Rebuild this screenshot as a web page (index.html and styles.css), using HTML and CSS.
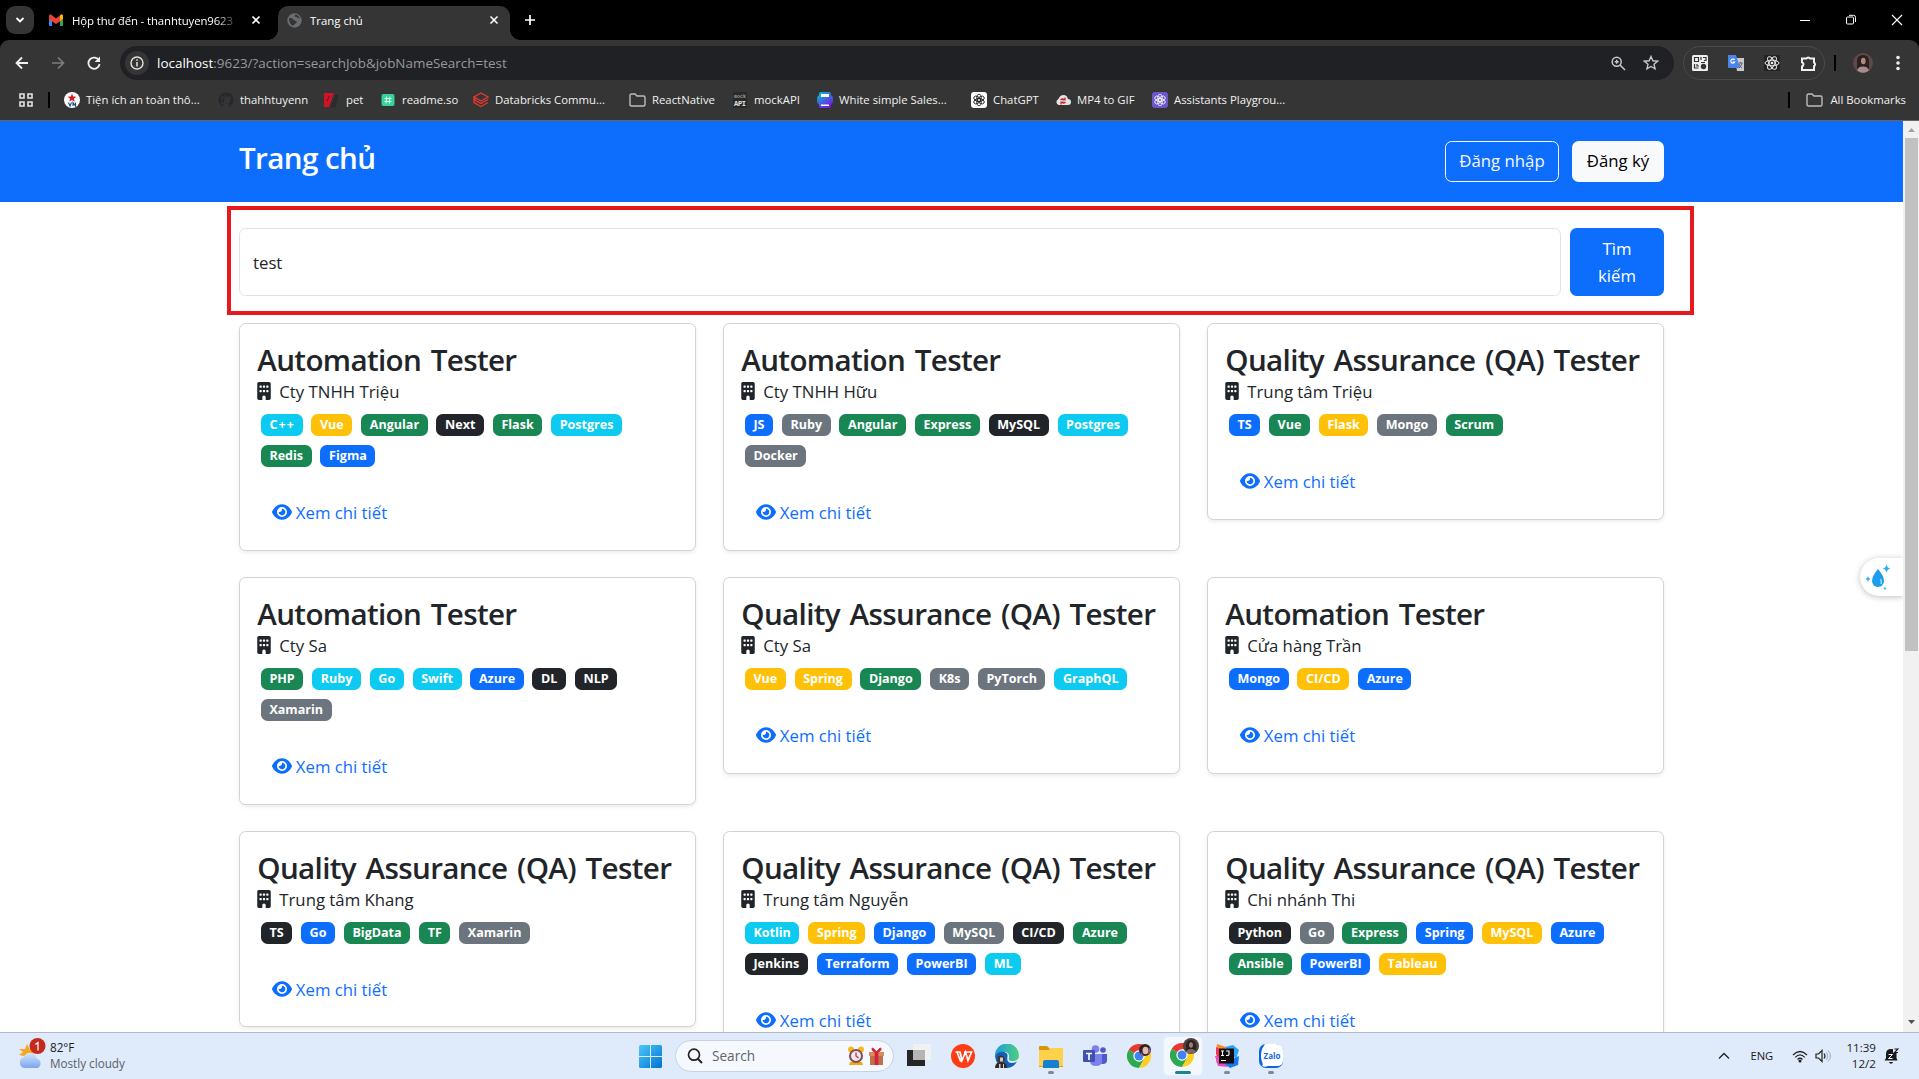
FILE: index.html
```html
<!DOCTYPE html>
<html lang="vi">
<head>
<meta charset="utf-8">
<title>Trang chủ</title>
<link rel="stylesheet" href="styles.css">
</head>
<body>
<svg class="sprite" width="0" height="0">
  <defs>
    <linearGradient id="winG" x1="0" y1="0" x2="1" y2="1"><stop offset="0" stop-color="#4cc8fb"/><stop offset="1" stop-color="#0072d0"/></linearGradient>
    <linearGradient id="edgeG" x1="0" y1="0" x2="1" y2="0"><stop offset="0" stop-color="#1b9de2"/><stop offset="1" stop-color="#4fd07a"/></linearGradient>
    <linearGradient id="canvaG" x1="0" y1="0" x2=".6" y2="1"><stop offset="0" stop-color="#00c4cc"/><stop offset="1" stop-color="#7020e8"/></linearGradient>
    <linearGradient id="cloudG" x1="0" y1="0" x2="0" y2="1"><stop offset="0" stop-color="#d6e6fd"/><stop offset="1" stop-color="#7ba6ec"/></linearGradient>
    <symbol id="building" viewBox="0 0 384 512"><path fill-rule="evenodd" d="M48 0C21.500 0 0 21.500 0 48V464c0 26.500 21.500 48 48 48h96V432c0-26.500 21.500-48 48-48s48 21.500 48 48v80h96c26.500 0 48-21.500 48-48V48c0-26.500-21.500-48-48-48H48zM64 240c0-8.800 7.200-16 16-16h32c8.800 0 16 7.200 16 16v32c0 8.800-7.200 16-16 16H80c-8.800 0-16-7.200-16-16zm112-16h32c8.800 0 16 7.200 16 16v32c0 8.800-7.200 16-16 16H176c-8.800 0-16-7.200-16-16V240c0-8.800 7.200-16 16-16zm80 16c0-8.800 7.200-16 16-16h32c8.800 0 16 7.200 16 16v32c0 8.800-7.200 16-16 16H272c-8.800 0-16-7.200-16-16zM80 96h32c8.800 0 16 7.200 16 16v32c0 8.800-7.200 16-16 16H80c-8.800 0-16-7.200-16-16V112c0-8.800 7.200-16 16-16zm80 16c0-8.800 7.200-16 16-16h32c8.800 0 16 7.200 16 16v32c0 8.800-7.200 16-16 16H176c-8.800 0-16-7.200-16-16zM272 96h32c8.800 0 16 7.200 16 16v32c0 8.800-7.200 16-16 16H272c-8.800 0-16-7.200-16-16V112c0-8.800 7.200-16 16-16z"/></symbol>
    <symbol id="eye" viewBox="0 0 576 512"><path d="M288 32c-80.800 0-145.500 36.800-192.600 80.600C48.600 156 17.300 208 2.500 243.700c-3.300 7.900-3.300 16.700 0 24.600C17.300 304 48.600 356 95.400 399.400C142.500 443.200 207.200 480 288 480s145.500-36.800 192.600-80.600c46.800-43.500 78.100-95.400 93-131.100c3.300-7.900 3.300-16.700 0-24.600c-14.900-35.700-46.200-87.700-93-131.100C433.500 68.800 368.800 32 288 32zM144 256a144 144 0 1 1 288 0 144 144 0 1 1-288 0zm144-64c0 35.300-28.700 64-64 64c-7.100 0-13.900-1.200-20.300-3.300c-5.500-1.800-11.900 1.600-11.700 7.400c.3 6.900 1.300 13.800 3.200 20.700c13.700 51.200 66.400 81.600 117.600 67.900s81.600-66.400 67.900-117.600c-11.100-41.500-47.800-69.400-88.600-71.100c-5.800-.2-9.200 6.100-7.400 11.700c2.100 6.400 3.300 13.200 3.300 20.300z"/></symbol>
    <symbol id="x" viewBox="0 0 10 10"><path d="M1.500 1.500l7 7M8.500 1.500l-7 7" fill="none" stroke="currentColor" stroke-width="1.600"/></symbol>
    <symbol id="folder" viewBox="0 0 17 14"><path d="M1 2.500Q1 1 2.500 1H6l2 2h6.500Q16 3 16 4.500v7q0 1.500-1.500 1.500h-12Q1 13 1 11.500z" fill="none" stroke="#bdbdbd" stroke-width="1.400"/></symbol>
    <symbol id="knot" viewBox="0 0 16 16"><g fill="none" stroke="currentColor" stroke-width="1"><ellipse cx="8" cy="5.600" rx="2.600" ry="4.300"/><ellipse cx="8" cy="5.600" rx="2.600" ry="4.300" transform="rotate(60 8 8)"/><ellipse cx="8" cy="5.600" rx="2.600" ry="4.300" transform="rotate(120 8 8)"/><ellipse cx="8" cy="5.600" rx="2.600" ry="4.300" transform="rotate(180 8 8)"/><ellipse cx="8" cy="5.600" rx="2.600" ry="4.300" transform="rotate(240 8 8)"/><ellipse cx="8" cy="5.600" rx="2.600" ry="4.300" transform="rotate(300 8 8)"/></g></symbol>
    <symbol id="chrome" viewBox="0 0 24 24"><path d="M12 12L1.600 6A12 12 0 0 1 22.400 6z" fill="#e33b2e"/><path d="M12 12L1.600 6A12 12 0 0 0 12 24l5.200-9z" fill="#2da94f"/><path d="M12 12l5 3-5 9A12 12 0 0 0 22.400 6H12z" fill="#fdd023"/><circle cx="12" cy="12" r="5.700" fill="#fff"/><circle cx="12" cy="12" r="4.500" fill="#3f83f1"/></symbol>
  </defs>
</svg>

<div class="tabs">
  <div class="tab-search"><svg width="10" height="8" viewBox="0 0 10 8"><path d="M1.500 2L5 5.500 8.500 2" fill="none" stroke="#fff" stroke-width="1.800"/></svg></div>
  <div class="tab">
    <svg width="16" height="12" viewBox="0 0 16 12"><path d="M1 1.500V11q0 1 1 1h2V4z" fill="#4285f4"/><path d="M15 1.500V11q0 1-1 1h-2V4z" fill="#34a853"/><path d="M1 5.500V2Q1 0 3 .5l5 4 5-4q2-.5 2 1.500v3.500L8 10z" fill="#ea4335"/><path d="M12 1.500l1-1q2-.5 2 1.500v2.500L12 7z" fill="#fbbc04"/></svg>
    <span class="tab-title fade">Hộp thư đến - thanhtuyen9623</span>
    <svg class="close" width="10" height="10"><use href="#x"/></svg>
  </div>
  <div class="tab active">
    <svg width="15" height="15" viewBox="0 0 15 15"><circle cx="7.500" cy="7.500" r="7.200" fill="#6a6d70"/><path d="M2 5q3-.5 4 1t3 2-1 3-2 2Q2 11 2 5zM8 1.500q-1 2 1 2.500t4 2Q12 2 8 1.500z" fill="#353535"/></svg>
    <span class="tab-title">Trang chủ</span>
    <svg class="close" width="10" height="10"><use href="#x"/></svg>
  </div>
  <svg class="plus" width="12" height="12" viewBox="0 0 12 12"><path d="M6 1v10M1 6h10" stroke="#fff" stroke-width="1.700"/></svg>
  <div class="window-buttons">
    <svg width="12" height="12" viewBox="0 0 12 12"><path d="M1 6.500h10" stroke="#fff"/></svg>
    <svg width="12" height="12" viewBox="0 0 12 12"><path d="M1.500 4q0-1 1-1h5q1 0 1 1v5q0 1-1 1h-5q-1 0-1-1zM4 1.300h4.500q2 0 2 2V8" fill="none" stroke="#fff"/></svg>
    <svg width="12" height="12" viewBox="0 0 12 12"><path d="M1 1l10 10M11 1L1 11" stroke="#fff" stroke-width="1.100"/></svg>
  </div>
</div>

<div class="toolbar">
  <div class="nav">
    <svg width="14" height="14" viewBox="0 0 14 14"><path d="M13 7H2M7 1.500L1.500 7 7 12.500" fill="none" stroke="#f0f0f0" stroke-width="1.800"/></svg>
    <svg width="14" height="14" viewBox="0 0 14 14"><path d="M1 7h11M7 1.500L12.500 7 7 12.500" fill="none" stroke="#7d7d7d" stroke-width="1.700"/></svg>
    <svg width="14" height="14" viewBox="0 0 14 14"><path d="M12 4.500A5.600 5.600 0 1 0 12.600 8" fill="none" stroke="#f0f0f0" stroke-width="1.800"/><path d="M13 .5V6H7.600z" fill="#f0f0f0"/></svg>
  </div>
  <div class="omnibox">
    <span class="info"><svg width="14" height="14" viewBox="0 0 14 14"><circle cx="7" cy="7" r="6" fill="none" stroke="#e3e3e3" stroke-width="1.400"/><path d="M7 6v4.500M7 3.300v1.500" stroke="#e3e3e3" stroke-width="1.500"/></svg></span>
    <span class="url"><b>localhost</b>:9623/?action=searchJob&amp;jobNameSearch=test</span>
    <svg class="zoom-icon" width="15" height="15" viewBox="0 0 15 15"><circle cx="5.700" cy="5.700" r="4.500" fill="none" stroke="#c7c7c7" stroke-width="1.500"/><path d="M9 9l5 5M5.700 3.700v4M3.700 5.700h4" stroke="#c7c7c7" stroke-width="1.500"/></svg>
    <svg width="16" height="16" viewBox="0 0 16 16"><path d="M8 1.500l1.900 4.300 4.700.4-3.600 3.100 1.100 4.600L8 11.500l-4.100 2.400L5 9.300 1.400 6.200l4.700-.4z" fill="none" stroke="#c7c7c7" stroke-width="1.400"/></svg>
  </div>
  <div class="extensions">
    <svg width="16" height="16" viewBox="0 0 16 16"><rect width="16" height="16" rx="1.500" fill="#eee"/><path d="M2.500 2.500h4v4h-4zM9 2v3M11 2.500h3v3h-2M2.500 9v4h4M5 9v2h2M9 7.500h4" fill="none" stroke="#333" stroke-width="1.200"/><circle cx="11.500" cy="11.500" r="2.700" fill="#333"/></svg>
    <svg width="16" height="16" viewBox="0 0 16 16"><path d="M7 3h9v13H9z" fill="#c9c9c9"/><path d="M0 0h8l4 13H1q-1 0-1-1z" fill="#4a86e8"/><path d="M6.500 5A2 2 0 1 0 6.600 7H4.800" fill="none" stroke="#fff" stroke-width="1.200"/><path d="M10.500 8h4M12.500 7v1M14 8q-1 4-3 5M11 9q1 3 3 4" fill="none" stroke="#557" stroke-width=".9"/></svg>
    <svg width="16" height="16" viewBox="0 0 16 16"><path fill="#222" d="M0 0h16v16H0z"/><g fill="none" stroke="#e8e8e8"><ellipse cx="8" cy="8" rx="7" ry="2.800"/><ellipse cx="8" cy="8" rx="7" ry="2.800" transform="rotate(60 8 8)"/><ellipse cx="8" cy="8" rx="7" ry="2.800" transform="rotate(120 8 8)"/></g><circle cx="8" cy="8" r="1.300" fill="#eee"/></svg>
    <svg width="17" height="17" viewBox="0 0 17 17"><path d="M2 3.500h4.500a2 2 0 0 1 3.500 0h4v4.200a2 2 0 0 1 0 3.500V15H2v-3.500a2.300 2.300 0 0 0 0-4.300z" fill="none" stroke="#f0f0f0" stroke-width="2"/></svg>
  </div>
  <i class="sep"></i>
  <svg class="avatar" width="20" height="20" viewBox="0 0 20 20"><circle cx="10" cy="10" r="10" fill="#5d4a46"/><path d="M4 17V8q0-6 6-6t6 6v9z" fill="#2b2022"/><ellipse cx="10.300" cy="8" rx="2.300" ry="3.200" fill="#b38a7a"/><path d="M4 17.500q1-4 6-4t6 4q-6 4.500-12 0z" fill="#a58e8a"/></svg>
  <svg width="4" height="16" viewBox="0 0 4 16"><g fill="#eee"><circle cx="2" cy="2.500" r="1.800"/><circle cx="2" cy="8" r="1.800"/><circle cx="2" cy="13.500" r="1.800"/></g></svg>
</div>

<div class="bookmarks">
  <svg width="14" height="14" viewBox="0 0 14 14"><path d="M1 1h4v4H1zM9 1h4v4H9zM1 9h4v4H1zM9 9h4v4H9z" fill="none" stroke="#e3e3e3" stroke-width="1.600"/></svg>
  <i class="sep"></i>
  <div class="marks">
    <span><svg width="16" height="16" viewBox="0 0 16 16"><circle cx="8" cy="8" r="8" fill="#fff"/><path d="M8 1.500l1.200 3 3.200.2-2.500 2 .9 3.100L8 8l-2.800 1.800.9-3.100-2.500-2 3.200-.2z" fill="#d71920"/><path d="M4.500 10.500L6 14l1.500-3.500M9 14v-3.500l2.500 3.500v-3.500" fill="none" stroke="#1d4e89" stroke-width="1.100"/></svg>Tiện ích an toàn thô...</span>
    <span><svg width="16" height="16" viewBox="0 0 16 16"><path d="M8 .5a7.500 7.500 0 0 0-2.500 14.600V12Q3.500 12 3 10.500M5.500 11Q3 10 3.500 6.500L3.600 4l2 .8q2.400-.6 4.800 0l2-.8.1 2.500Q13 10 10.500 11v4.100A7.500 7.500 0 0 0 8 .5z" fill="#24292e"/></svg>thahhtuyenn</span>
    <span><svg width="20" height="16" viewBox="0 0 20 16"><path d="M4 1h10L9 15H4z" fill="#d3122a"/><path d="M9.500 4L7 9M16 3l-5 12h4l3-12z" fill="#2b2b2b" stroke="#2b2b2b"/></svg>pet</span>
    <span><svg width="16" height="16" viewBox="0 0 16 16"><rect x="1.500" y="2" width="13" height="12" rx="2" fill="#36d399"/><path d="M6.500 4.500L6 11.500M10 4.500l-.5 7M4.500 6.500h7M4.500 9.500h7" stroke="#d9fff0"/></svg>readme.so</span>
    <span><svg width="16" height="16" viewBox="0 0 16 16"><path d="M1 5l7 4 7-4-7-4zM1 5v2.500l7 4 7-4M1 8v2.500l7 4 7-4M1 7.500l7 4" fill="none" stroke="#e3382c" stroke-width="1.400"/></svg>Databricks Commu...</span>
    <span><svg width="17" height="14"><use href="#folder"/></svg>ReactNative</span>
    <span><svg width="16" height="16" viewBox="0 0 16 16"><path fill="#292929" d="M1 0h14v16H1z"/><g font-family="Liberation Mono,monospace" font-weight="700"><text x="2" y="6" font-size="5" fill="#9b9b9b">mock</text><text x="2" y="14" font-size="7" fill="#e4e4e4" textLength="12">API</text></g></svg>mockAPI</span>
    <span><svg width="16" height="16" viewBox="0 0 16 16"><rect y="3" width="16" height="10" rx="4" fill="url(#canvaG)"/><rect x="2" width="12" height="16" rx="2" fill="url(#canvaG)"/><path d="M4 2h8v3H4zM4 12.500h8V14H4z" fill="#fff"/></svg>White simple Sales...</span>
    <span><svg width="16" height="16" viewBox="0 0 16 16"><rect width="16" height="16" rx="3" fill="#fff"/><g color="#222"><use href="#knot" x="1" y="1" width="14" height="14"/></g></svg>ChatGPT</span>
    <span><svg width="16" height="16" viewBox="0 0 16 16"><path d="M3.500 13a3.200 3.200 0 0 1 0-6Q5 3 8.500 3t4.500 4a3 3 0 0 1 0 6z" fill="#e5e5e5"/><path d="M5.500 8q2-2 4.500 0M10.500 10q-2 2-4.500 0M10 5.500V8H7.500M6 12.500V10h2.500" fill="none" stroke="#c3262c" stroke-width="1.200"/></svg>MP4 to GIF</span>
    <span><svg width="16" height="16" viewBox="0 0 16 16"><rect width="16" height="16" rx="3" fill="#6e56cf"/><g color="#eee"><use href="#knot" x="1" y="1" width="14" height="14"/></g></svg>Assistants Playgrou...</span>
  </div>
  <i class="sep"></i>
  <span class="all"><svg width="17" height="14"><use href="#folder"/></svg>All Bookmarks</span>
</div>

<div class="viewport">
  <div class="page">
    <header>
      <div class="container">
        <h1>Trang chủ</h1>
        <div class="auth"><a class="btn outline">Đăng nhập</a><a class="btn light">Đăng ký</a></div>
      </div>
    </header>
    <main class="container">
      <form class="search">
        <div class="field">test</div>
        <a class="btn primary">Tìm kiếm</a>
        <div class="highlight"></div>
      </form>
      <section class="jobs">
        <article><h3>Automation Tester</h3><p class="company"><svg><use href="#building"/></svg>Cty TNHH Triệu</p>
          <div class="tags"><b class="info-c wide">C++</b><b class="warn">Vue</b><b class="ok">Angular</b><b class="dark">Next</b><b class="ok">Flask</b><b class="info-c">Postgres</b><b class="ok">Redis</b><b class="blue">Figma</b></div>
          <a class="detail"><svg><use href="#eye"/></svg>Xem chi tiết</a></article>
        <article><h3>Automation Tester</h3><p class="company"><svg><use href="#building"/></svg>Cty TNHH Hữu</p>
          <div class="tags"><b class="blue">JS</b><b class="gray">Ruby</b><b class="ok">Angular</b><b class="ok">Express</b><b class="dark">MySQL</b><b class="info-c">Postgres</b><b class="gray">Docker</b></div>
          <a class="detail"><svg><use href="#eye"/></svg>Xem chi tiết</a></article>
        <article><h3>Quality Assurance (QA) Tester</h3><p class="company"><svg><use href="#building"/></svg>Trung tâm Triệu</p>
          <div class="tags"><b class="blue">TS</b><b class="ok">Vue</b><b class="warn">Flask</b><b class="gray">Mongo</b><b class="ok">Scrum</b></div>
          <a class="detail"><svg><use href="#eye"/></svg>Xem chi tiết</a></article>
        <article><h3>Automation Tester</h3><p class="company"><svg><use href="#building"/></svg>Cty Sa</p>
          <div class="tags"><b class="ok">PHP</b><b class="info-c">Ruby</b><b class="info-c">Go</b><b class="info-c">Swift</b><b class="blue">Azure</b><b class="dark">DL</b><b class="dark">NLP</b><b class="gray">Xamarin</b></div>
          <a class="detail"><svg><use href="#eye"/></svg>Xem chi tiết</a></article>
        <article><h3>Quality Assurance (QA) Tester</h3><p class="company"><svg><use href="#building"/></svg>Cty Sa</p>
          <div class="tags"><b class="warn">Vue</b><b class="warn">Spring</b><b class="ok">Django</b><b class="gray">K8s</b><b class="gray">PyTorch</b><b class="info-c">GraphQL</b></div>
          <a class="detail"><svg><use href="#eye"/></svg>Xem chi tiết</a></article>
        <article><h3>Automation Tester</h3><p class="company"><svg><use href="#building"/></svg>Cửa hàng Trần</p>
          <div class="tags"><b class="blue">Mongo</b><b class="warn">CI/CD</b><b class="blue">Azure</b></div>
          <a class="detail"><svg><use href="#eye"/></svg>Xem chi tiết</a></article>
        <article><h3>Quality Assurance (QA) Tester</h3><p class="company"><svg><use href="#building"/></svg>Trung tâm Khang</p>
          <div class="tags"><b class="dark">TS</b><b class="blue">Go</b><b class="ok">BigData</b><b class="ok">TF</b><b class="gray">Xamarin</b></div>
          <a class="detail"><svg><use href="#eye"/></svg>Xem chi tiết</a></article>
        <article><h3>Quality Assurance (QA) Tester</h3><p class="company"><svg><use href="#building"/></svg>Trung tâm Nguyễn</p>
          <div class="tags"><b class="info-c">Kotlin</b><b class="warn">Spring</b><b class="blue">Django</b><b class="gray">MySQL</b><b class="dark">CI/CD</b><b class="ok">Azure</b><b class="dark">Jenkins</b><b class="blue">Terraform</b><b class="blue">PowerBI</b><b class="info-c">ML</b></div>
          <a class="detail"><svg><use href="#eye"/></svg>Xem chi tiết</a></article>
        <article><h3>Quality Assurance (QA) Tester</h3><p class="company"><svg><use href="#building"/></svg>Chi nhánh Thi</p>
          <div class="tags"><b class="dark">Python</b><b class="gray">Go</b><b class="ok">Express</b><b class="blue">Spring</b><b class="warn">MySQL</b><b class="blue">Azure</b><b class="ok">Ansible</b><b class="blue">PowerBI</b><b class="warn">Tableau</b></div>
          <a class="detail"><svg><use href="#eye"/></svg>Xem chi tiết</a></article>
      </section>
    </main>
    <div class="drop"><svg width="26" height="32" viewBox="0 0 26 32"><path d="M13 8q6 7 6 12a6 6 0 0 1-12 0q0-5 6-12z" fill="#1c9df0"/><path d="M15.500 18q1.500 2 .5 5" stroke="#a9defc" stroke-width="1.500" fill="none"/><path d="M21.500 3q.5 4 4 4.500-3.500.5-4 4.500-.5-4-4-4.500 3.500-.5 4-4.500zM3 15q.3 2.500 2.700 3-2.400.5-2.700 3-.3-2.500-2.700-3Q2.700 17.500 3 15zM20 25.500q.2 1.800 1.800 2-1.600.2-1.800 2-.2-1.800-1.800-2 1.600-.2 1.800-2z" fill="#35adf3"/></svg></div>
  </div>
  <div class="scrollbar">
    <svg width="7" height="4" viewBox="0 0 7 4"><path d="M0 4L3.500 0 7 4z" fill="#a3a3a3"/></svg>
    <div class="thumb"></div>
    <svg class="down" width="7" height="4" viewBox="0 0 7 4"><path d="M0 0l3.500 4L7 0z" fill="#505050"/></svg>
  </div>
</div>

<div class="taskbar">
  <div class="weather">
    <svg width="28" height="32" viewBox="0 0 28 32"><path d="M9 6l3 6 5-2-2 8H6l-5-1 4-3-4-3 6 0z" fill="#f7a823"/><path d="M6 30a5.500 5.500 0 0 1-.5-10.500Q8 14 13 15q5 .5 5.500 5.500A5 5 0 0 1 19.500 30z" fill="url(#cloudG)"/><circle cx="19.500" cy="8" r="8" fill="#c42b1c"/><path d="M17.500 6.500l2.500-2v8" fill="none" stroke="#fff" stroke-width="1.200"/></svg>
    <p>82°F<br><span>Mostly cloudy</span></p>
  </div>
  <div class="dock">
    <svg class="win" width="23" height="23" viewBox="0 0 23 23"><path d="M0 1.500Q0 0 1.500 0H11v11H0zM12 0h9.500Q23 0 23 1.500V11H12zM0 12h11v11H1.500Q0 23 0 21.500zM12 12h11v9.500q0 1.500-1.500 1.500H12z" fill="url(#winG)"/></svg>
    <div class="find">
      <svg width="16" height="16" viewBox="0 0 16 16"><circle cx="7" cy="6.700" r="5.500" fill="none" stroke="#222" stroke-width="1.700"/><path d="M11 11l4 4" stroke="#222" stroke-width="2"/></svg>
      <span>Search</span>
      <svg width="16" height="20" viewBox="0 0 16 20"><circle cx="3" cy="3.500" r="3" fill="#f6b921"/><circle cx="13" cy="3.500" r="3" fill="#f6b921"/><path d="M2 16h12l1 3H1z" fill="#f0a81e"/><circle cx="8" cy="10" r="7" fill="#80504c"/><circle cx="8" cy="10" r="5" fill="#eee6f2"/><path d="M8 6.500V10l2.500 2" stroke="#d22d45" stroke-width="1.300" fill="none"/></svg>
      <svg width="15" height="18" viewBox="0 0 15 18"><path d="M0 5h15v4H0z" fill="#d78b5b"/><path d="M1 9h13v9H1z" fill="#bd714b"/><path d="M5.700 5h3.600v13H5.700z" fill="#d9203b"/><path d="M7.500 5Q3 5 3 2t4.500 3Q12-1 12 2t-4.500 3z" fill="#d9203b" stroke="#d9203b"/></svg>
    </div>
    <div class="app view"><svg width="24" height="22" viewBox="0 0 24 22"><path d="M0 6h18v16H0z" fill="#252525"/><path d="M6 1q0-1 1-1h16q1 0 1 1v14q0 1-1 1H6z" fill="#f1f1f1"/><path d="M6 6h12v10H6z" fill="#b5b5b5"/></svg></div>
    <div class="app"><svg width="24" height="24" viewBox="0 0 24 24"><circle cx="12" cy="12" r="12" fill="#ff3d14"/><path d="M4.500 8h4.500l2 8.500L14.500 8 17 16.500 20.500 8H13M6 8l3.500 9h1.300" fill="none" stroke="#fff" stroke-width="1.700"/></svg></div>
    <div class="app"><svg width="24" height="24" viewBox="0 0 24 24"><path d="M0 12A12 12 0 0 1 24 11q0 6-6 6-5 0-4-3 1-6-5-6-6 0-9 4z" fill="url(#edgeG)"/><path d="M0 12q3-5 9-4 4 1 3.500 4-1.500 7 4 7 3 0 5.500-1.500Q18.500 24 12 24 1 23 0 12z" fill="#1461b0"/><circle cx="6" cy="15" r="3.500" fill="#3d3534"/><path d="M0 24q0-6 6-6t6 6z" fill="#302a29"/><path d="M5 13.500h3v4H5zM4 20h1.500v4H4zM8 20h1v4H8z" fill="#dcc6b8"/></svg></div>
    <div class="app run"><svg width="24" height="24" viewBox="0 0 24 24"><path d="M0 3q0-1 1-1h7l3 3v5H0z" fill="#d9960a"/><path d="M0 6h10l2-2h12v18H0z" fill="#ffd04a"/><path d="M4 24v-6q0-2 2-2h12q2 0 2 2v6z" fill="#157fd0"/><path d="M0 22h4v1H0zM20 22h4v1h-4z" fill="#e1a11d"/></svg></div>
    <div class="app"><svg width="24" height="24" viewBox="0 0 24 24"><circle cx="12.500" cy="5" r="3.800" fill="#7b83eb"/><circle cx="20" cy="6" r="2.800" fill="#5059c9"/><path d="M16 10h8v6q0 4-4 4t-4-4z" fill="#5059c9"/><path d="M7 10h12v7q0 5-6 5t-6-5z" fill="#7b83eb"/><rect y="6" width="12" height="12" rx="1" fill="#4450ad"/><path d="M3 9.500h6M6 9.500V16" stroke="#fff" stroke-width="1.600"/></svg></div>
    <div class="app"><svg width="24" height="24" viewBox="0 0 24 24"><use href="#chrome" width="24" height="24"/><circle cx="18" cy="6" r="6" fill="#2c2225"/><ellipse cx="18.500" cy="6.500" rx="3" ry="3.800" fill="#e6b9a9"/><path d="M13 11l2-3 1 4M21 11l1-8 2 4" fill="#8b5c9c"/></svg></div>
    <div class="app run current"><svg width="30" height="30" viewBox="0 0 30 30"><use href="#chrome" x="1" y="5" width="24" height="24"/><circle cx="22" cy="8" r="8" fill="#4d423e"/><path d="M17 13V7q1-5 5-5t5 5v6z" fill="#2a2223"/><ellipse cx="22" cy="7" rx="2" ry="2.800" fill="#a17e72"/><path d="M17 14q1-3 5-3t5 3q-5 3-10 0z" fill="#7d6a66"/></svg></div>
    <div class="app run"><svg width="24" height="24" viewBox="0 0 24 24"><path d="M2 0l9 3-5 12-5 4z" fill="#fb8c22"/><path d="M0 12l6-1 7 12-10-1z" fill="#e74ac4"/><path d="M10 3l8-2 6 5-3 9z" fill="#2aa3f4"/><path d="M24 12l-1 9-8 3-6-5z" fill="#1b77ec"/><path d="M1 3l4 2-1 9-3-4z" fill="#f5345e"/><path d="M4 4.500h15v15H4z" fill="#100c0d"/><path d="M6 7h3M7.500 7v4.500M6 11.500h3M11 7h3v3.500q0 1-2 1h-1M6 16.500h5" fill="none" stroke="#fff" stroke-width="1.100"/></svg></div>
    <div class="app run"><svg width="24" height="24" viewBox="0 0 24 24"><rect width="24" height="24" rx="7" fill="#0b63e5"/><path d="M6 0h11q7 0 7 7v9q0 6-6 6H9q-3 1.500-6 0 1.500-2 0-4-2-6 0-13z" fill="#fff"/><text x="4.500" y="14.500" font-family="Open Sans,sans-serif" font-size="8" font-weight="700" fill="#1268e8" textLength="17">Zalo</text></svg></div>
  </div>
  <div class="tray">
    <svg class="up" width="12" height="8" viewBox="0 0 12 8"><path d="M1 6.500l5-5 5 5" fill="none" stroke="#222" stroke-width="1.300"/></svg>
    <span class="lang">ENG</span>
    <svg class="wifi" width="16" height="13" viewBox="0 0 16 13"><g fill="none" stroke="#222" stroke-width="1.200"><path d="M1 5q7-7 14 0M3.200 7.300q4.800-4.800 9.600 0M5.500 9.500q2.500-2.500 5 0"/></g><circle cx="8" cy="11" r="1.500" fill="#222"/></svg>
    <svg class="vol" width="17" height="14" viewBox="0 0 17 14"><path d="M1 5h2.500L7 1.500v11L3.500 9H1zM9 4.500q2 2.500 0 5" fill="none" stroke="#222" stroke-width="1.200"/><path d="M11 3q3.500 4 0 8M13 1.500q5 5.500 0 11" fill="none" stroke="#a3abb5"/></svg>
    <p class="clock">11:39<br>12/2</p>
    <svg width="15" height="16" viewBox="0 0 15 16"><path d="M2 6q0-5 5-5h2v4h3.500v5l1 2.500H.500L2 10zM5 14h4q-.5 1.700-2 1.700T5 14z" fill="#1b1b1b"/><path d="M4.500 6.500h4l-4 4h4M10.500 1H14l-3.500 3.500H14" fill="none" stroke-width="1.100" stroke="#1b1b1b"/><path d="M4.500 6.500h4l-4 4h4" fill="none" stroke="#fff"/></svg>
  </div>
</div>
</body>
</html>
```
FILE: styles.css
```css
* { box-sizing: border-box; }
html, body { margin: 0; height: 100%; overflow: hidden; }
body {
  display: flex;
  flex-direction: column;
  height: 1079px;
  background: #000;
  font-family: "Open Sans", "Noto Sans", sans-serif;
  color: #212529;
}
h1, h3, p { margin: 0; }
svg { flex: none; display: block; }
.sprite { position: absolute; }

/* Browser tabs */
.tabs {
  flex: none;
  display: flex;
  height: 40px;
  padding-left: 6px;
  color: #fff;
  font-size: 11.4px;
}
.tab-search {
  display: grid;
  place-items: center;
  width: 28px;
  height: 28px;
  margin-top: 6px;
  border-radius: 9px;
  background: #353535;
}
.tab {
  display: flex;
  align-items: center;
  width: 232px;
  margin: 6px 0 0 12px;
  padding: 0 17px 6px 2px;
}
.tab-title {
  flex: 1;
  width: 0;
  margin: 0 12px 0 8px;
  white-space: nowrap;
}
.fade {
  letter-spacing: -.12px;
  mask-image: linear-gradient(90deg, #000 86%, transparent);
}
.tab.active {
  position: relative;
  margin-left: 0;
  padding: 0 11px 6px 9px;
  border-radius: 10px 10px 0 0;
  background: #353535;
}
.tab.active::before, .tab.active::after {
  content: "";
  position: absolute;
  bottom: 0;
  width: 10px;
  height: 10px;
}
.tab.active::before { left: -10px; background: radial-gradient(circle at 0 0, transparent 9.5px, #353535 10px); }
.tab.active::after { right: -10px; background: radial-gradient(circle at 100% 0, transparent 9.5px, #353535 10px); }
.plus { margin: 14px 0 0 14px; }
.window-buttons { display: flex; gap: 34px; margin: 14px 16px 0 auto; }

/* Address bar */
.toolbar {
  flex: none;
  display: flex;
  align-items: center;
  height: 46px;
  padding: 0 19px 0 15px;
  border-radius: 9px 9px 0 0;
  background: #353535;
}
.nav { flex: none; display: flex; gap: 22px; width: 105px; }
.omnibox {
  flex: none;
  display: flex;
  align-items: center;
  width: 1554px;
  height: 34px;
  padding: 0 15px 0 5px;
  border-radius: 17px;
  background: #202124;
}
.info {
  display: grid;
  place-items: center;
  width: 24px;
  height: 24px;
  border-radius: 50%;
  background: #353535;
}
.url { flex: 1; margin-left: 8px; font-size: 13.45px; color: #97999c; }
.url b { font-weight: 400; color: #fff; }
.zoom-icon { margin-right: 17px; }
.extensions {
  flex: none;
  display: flex;
  align-items: center;
  gap: 20px;
  width: 142px;
  height: 34px;
  margin-left: 9px;
  padding-left: 8px;
  border: 1px solid #4b4b4b;
  border-radius: 17px;
}
.sep { flex: none; width: 2px; height: 16px; background: #000; }
.toolbar .sep { margin-left: 9px; }
.avatar { margin: 0 23px 0 17px; }

/* Bookmarks */
.bookmarks {
  flex: none;
  display: flex;
  align-items: center;
  height: 35px;
  padding: 0 13px 7px 19px;
  border-bottom: 1px solid #6a665f;
  background: #353535;
  color: #f1f1f1;
  font-size: 11.35px;
  white-space: nowrap;
}
.bookmarks > .sep { margin-left: 15px; }
.marks {
  flex: 1;
  display: grid;
  grid-template-columns: 154px 102px 60px 93px 156px 103px 85px 154px 84px 97px 140px;
  padding-left: 14px;
}
.marks span, .all { display: flex; align-items: center; gap: 6px; }
.all { margin-left: 16px; gap: 7px; }

/* Page */
.viewport { flex: none; display: flex; height: 911px; background: #fff; }
.page { position: relative; flex: 1; overflow: hidden; font-size: 16.75px; }
.container { width: 1425px; margin-left: 239px; }
header { height: 81px; background: #0d6efd; }
header .container { display: flex; justify-content: space-between; padding-top: 18px; }
h1 {
  color: #fff;
  font-size: 29.6px;
  font-weight: 600;
  line-height: 37px;
  letter-spacing: -.6px;
}
.auth { display: flex; gap: 13px; margin-top: 2px; }
.btn {
  display: flex;
  align-items: center;
  justify-content: center;
  height: 41px;
  border-radius: 6.6px;
  line-height: 26.4px;
  text-align: center;
}
.outline { width: 114px; border: 1px solid #f8f9fa; color: #f8f9fa; }
.light { width: 92px; background: #f8f9fa; color: #000; }
.search { position: relative; display: flex; gap: 9px; margin: 26px 0 27px; }
.field {
  flex: 1;
  display: flex;
  align-items: center;
  height: 68px;
  padding-left: 13px;
  border: 1px solid #dee2e6;
  border-radius: 6.6px;
}
.primary { width: 94px; height: 68px; padding: 1px 20px 0; background: #0d6efd; color: #fff; }
.highlight {
  position: absolute;
  inset: -22px -30px -19px -12px;
  border: 4px solid #e8191c;
}
.jobs {
  display: grid;
  grid-template-columns: repeat(3, 457px);
  column-gap: 27px;
  row-gap: 26.4px;
  align-items: start;
}
article {
  padding: 17px 17.3px 22.4px;
  border: 1px solid #d3d3d4;
  border-radius: 6.6px;
  background: #fff;
  box-shadow: 0 2px 4px rgba(0, 0, 0, .075);
}
h3 {
  margin-bottom: .8px;
  font-size: 29.6px;
  font-weight: 550;
  line-height: 37px;
  letter-spacing: -.65px;
  word-spacing: 2.500px;
  white-space: nowrap;
}
.company { display: flex; align-items: center; height: 26.4px; }
.company svg { width: 14px; height: 18px; margin: -2px 8px 0 0; fill: #212529; }
.tags {
  display: flex;
  flex-wrap: wrap;
  gap: 9px 8.8px;
  margin: 9.2px 0 0;
  padding: 0 0 29.8px 3.500px;
}
.tags b {
  height: 22px;
  padding: 0 8.6px;
  border-radius: 6.6px;
  color: #fff;
  font-size: 12.55px;
  line-height: 22px;
}
.tags .wide { padding-right: 7.500px; letter-spacing: 1.1px; }
.info-c { background: #0dcaf0; }
.warn { background: #ffc107; }
.ok { background: #198754; }
.dark { background: #212529; }
.blue { background: #0d6efd; }
.gray { background: #6c757d; }
.detail { display: flex; align-items: center; height: 30px; padding-left: 14.500px; color: #0d6efd; }
.detail svg { width: 20px; height: 18px; margin: -1px 4px 0 0; fill: #0d6efd; }
.drop {
  position: absolute;
  top: 437px;
  right: 0;
  width: 43px;
  height: 38px;
  padding: 3px 0 0 5px;
  border-radius: 19px 0 0 19px;
  background: #fff;
  box-shadow: 0 1px 6px rgba(0, 0, 0, .25);
}
.scrollbar {
  display: flex;
  flex-direction: column;
  align-items: center;
  width: 16px;
  padding: 7px 0 8px;
  background: #f1f1f1;
}
.thumb { width: 13px; height: 513px; margin-top: 6px; background: #c1c1c1; }
.down { margin-top: auto; }

/* Taskbar */
.taskbar {
  flex: none;
  display: grid;
  grid-template-columns: 639px 1fr auto;
  height: 47px;
  border-top: 1px solid #afb9c9;
  background: #dfeafb;
  font-size: 11.7px;
  line-height: 16.2px;
}
.weather { display: flex; padding: 5px 0 0 18px; gap: 4px; color: #1b1b1b; }
.weather p { padding-top: 1px; }
.weather span { color: #5a6068; }
.dock { display: flex; align-items: center; }
.find {
  display: flex;
  align-items: center;
  width: 219px;
  height: 32px;
  margin: 0 6px 0 13px;
  padding: 0 9px 0 11px;
  border: 1px solid #c6d3e6;
  border-radius: 16px;
  background: #f5f9fe;
  color: #5f6368;
  font-size: 13.6px;
}
.find span { flex: 1; margin-left: 9px; }
.find svg + svg { margin-left: 5px; }
.app {
  position: relative;
  display: grid;
  place-items: center;
  width: 38px;
  height: 38px;
  margin-right: 6px;
}
.view svg { margin-top: -2px; }
.run::after {
  content: "";
  position: absolute;
  bottom: 1px;
  left: 16px;
  width: 6px;
  height: 3px;
  border-radius: 2px;
  background: #82888f;
}
.current { border-radius: 4px; background: #f3f8fe; box-shadow: 0 0 0 1px #e5edf8; }
.current svg { margin: -6px 0 0 2px; }
.current::after { left: 11px; width: 16px; background: #1c8294; }
.tray { display: flex; align-items: center; padding-right: 20px; color: #1b1b1b; }
.up { margin-right: 20px; }
.lang { width: 42px; font-size: 11.2px; }
.wifi { margin-right: 7px; }
.vol { width: 17px; margin-right: 14px; }
.clock { margin-right: 8px; text-align: right; font-size: 11.6px; }
```
